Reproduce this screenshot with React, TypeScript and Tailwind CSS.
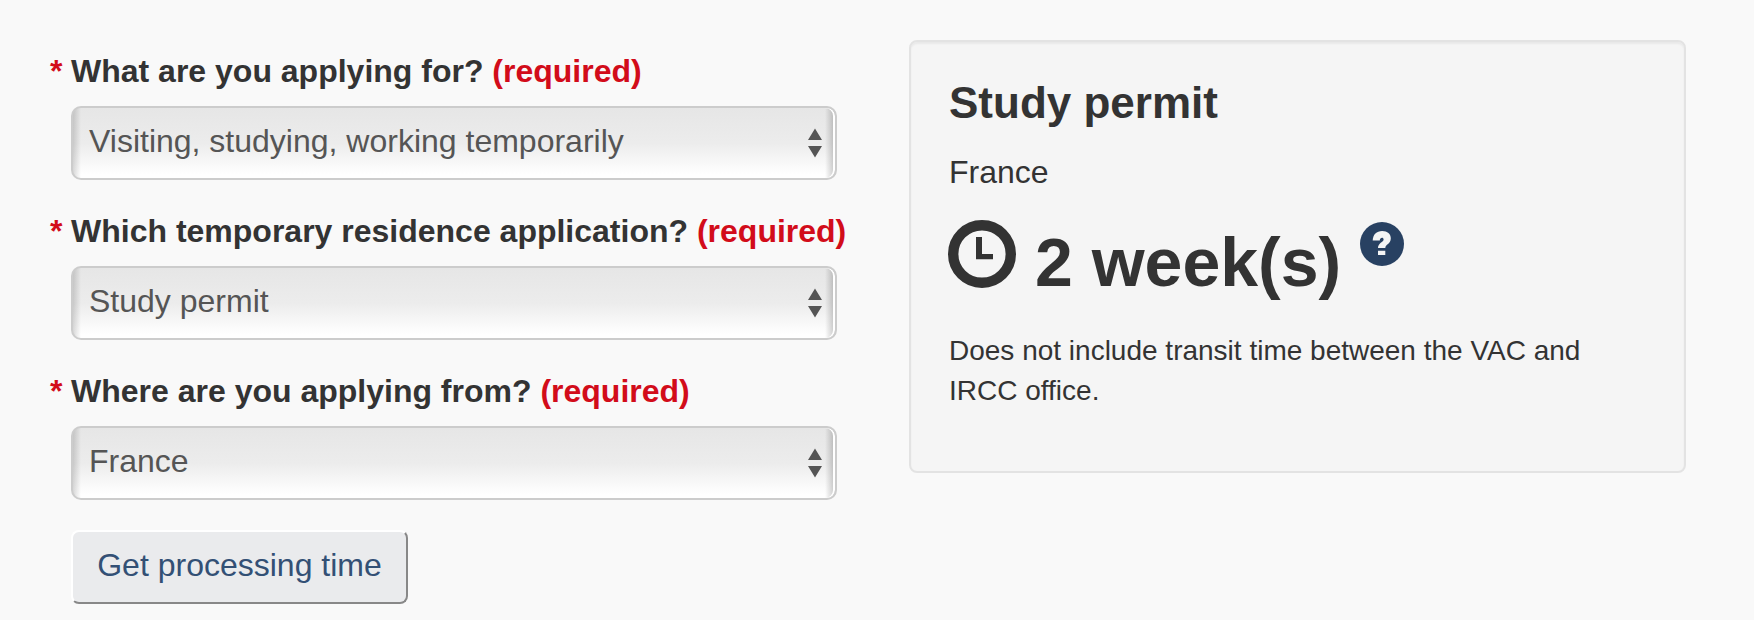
const fields = [
  { label: "What are you applying for?", value: "Visiting, studying, working temporarily" },
  { label: "Which temporary residence application?", value: "Study permit" },
  { label: "Where are you applying from?", value: "France" },
];

function Field({ label, value }: { label: string; value: string }) {
  return (
    <div>
      <div className="flex h-12 items-start whitespace-nowrap text-[32px] leading-[48px] font-bold">
        <span className="w-[21px] text-[#d20c1a]">*</span>
        <span>
          {label} <span className="text-[#d20c1a]">(required)</span>
        </span>
      </div>
      <button
        type="button"
        className="mt-[11px] ml-[21px] flex h-[74px] w-[766px] items-center justify-between rounded-[10px] border-2 border-[#ccc] bg-[linear-gradient(to_right,rgba(0,0,0,0.15),transparent_8px,transparent_calc(100%-10px),rgba(0,0,0,0.2)_calc(100%-1px)),linear-gradient(to_bottom,#e6e6e6,#ececec_50%,#fff_95%)] pr-[13px] pl-4 text-left text-[32px] text-[#555] shadow-[inset_-2px_0_0_#fff]"
      >
        <span className="-mt-1 leading-[48px] whitespace-nowrap">{value}</span>
        <svg width="14" height="30" viewBox="0 0 14 30" fill="#555" aria-hidden="true">
          <path d="M7 0.5 14 12H0ZM0 18H14L7 29.5Z" />
        </svg>
      </button>
    </div>
  );
}

export default function App() {
  return (
    <main className="flex h-[620px] w-[1754px] items-start overflow-hidden bg-[#f9f9f9] font-['Liberation_Sans',Arial,sans-serif] text-[#333]">
      <form className="flex w-[859px] flex-col gap-[27px] pt-[47px] pl-[50px]">
        {fields.map((f) => (
          <Field key={f.label} {...f} />
        ))}
        <button
          type="button"
          className="mt-[3px] ml-[21px] h-[74px] w-[337px] rounded-[8px] border-2 border-t-white border-r-[#888] border-b-[#888] border-l-white bg-[#eaebed] pb-1 text-[32px] leading-[48px] whitespace-nowrap text-[#335075]"
        >
          Get processing time
        </button>
      </form>
      <section className="mt-10 ml-[50px] h-[433px] w-[777px] rounded-[8px] border-2 border-[#e3e3e3] bg-[#f5f5f5] pt-[35px] pl-[37px] shadow-[inset_0_2px_2px_rgba(0,0,0,0.05)]">
        <h3 className="ml-px h-[52px] text-[44px] leading-[51px] font-bold">Study permit</h3>
        <p className="mt-[19px] ml-px h-12 text-[32px] leading-[48px]">France</p>
        <div className="mt-[16px] flex h-[96px] items-start">
          <svg className="mt-[8px]" width="68" height="68" viewBox="0 0 68 68" fill="none" aria-hidden="true">
            <circle cx="34" cy="34" r="28.8" stroke="#333" strokeWidth="10.4" />
            <path d="M28 17H34V34H45V39.3H28Z" fill="#333" />
          </svg>
          <span className="mt-[2px] ml-[19px] text-[68px] leading-[96px] font-bold whitespace-nowrap">2 week(s)</span>
          <svg className="mt-[10px] ml-[19px]" width="44" height="44" viewBox="0 0 44 44" aria-hidden="true">
            <circle cx="22" cy="22" r="22" fill="#284162" />
            <path
              d="M12.7 18.6C13 12.4 16.5 9 22.2 9C27.4 9 30.8 12 30.8 16.2C30.8 21.9 25.3 22.4 25.3 26H18C18 20.8 23.6 20 23.6 17.4C23.6 15 19.8 15.2 19.8 18.6ZM18 28.7H25.3V33H18Z"
              fill="#f5f5f5"
            />
          </svg>
        </div>
        <p className="mt-[23px] ml-px w-[650px] text-[28px] leading-[40px]">
          Does not include transit time between the VAC and IRCC office.
        </p>
      </section>
    </main>
  );
}
